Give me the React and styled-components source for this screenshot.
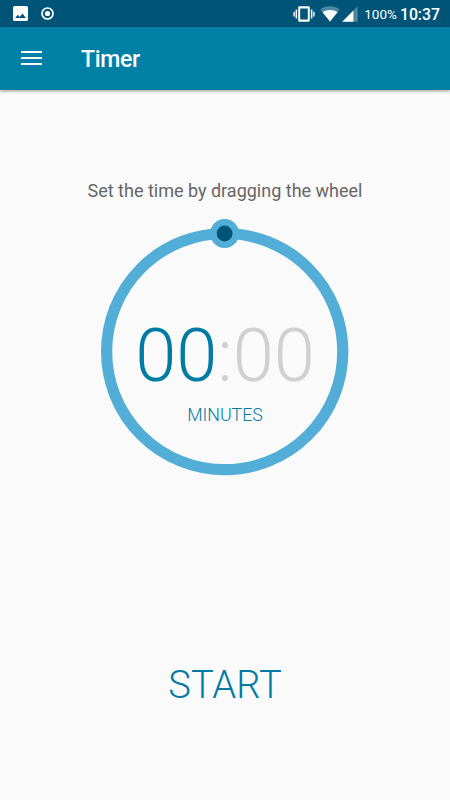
import React from 'react';
import styled, { createGlobalStyle } from "styled-components";

const GlobalStyle = createGlobalStyle`
  * {
    box-sizing: border-box;
    margin: 0;
    padding: 0;
  }

  body {
    background: #fafafa;
    font-family: Roboto, sans-serif;
  }
`;

const StatusIcons = () => (
    <>
        <svg width="22" height="18" viewBox="0 0 22 18" fill="#fff">
            <path fillRule="evenodd" d="M6.500 1.200h9a1.300 1.300 0 0 1 1.300 1.300v13a1.300 1.300 0 0 1-1.300 1.300h-9a1.300 1.300 0 0 1-1.300-1.300v-13A1.300 1.300 0 0 1 6.500 1.200zM7.200 3.500v11h7.600v-11z" />
            <path d="M2.600 4.500h1.500v9H2.600zM.4 6.800h1.400v4.600H.4zM17.900 4.500h1.500v9h-1.500zM20.200 6.800h1.400v4.600h-1.400z" />
        </svg>
        <svg width="20" height="16" viewBox="0 0 20 16">
            <path d="M10 15.500L.2 3.400C3 1.300 6.400.2 10 .2s7 1.100 9.800 3.200z" fill="#fff" opacity=".3" />
            <path d="M10 15.500L2.500 6.300C4.600 4.800 7.200 4 10 4s5.400.8 7.500 2.300z" fill="#fff" />
        </svg>
        <svg width="16" height="16" viewBox="0 0 16 16">
            <path d="M.3 15.700L15.700.3v15.400z" fill="#fff" opacity=".3" />
            <path d="M.3 15.700L11.400 4.600v11.100z" fill="#fff" />
        </svg>
    </>
);

const Dial = () => (
    <svg width="250" height="258" viewBox="0 0 250 258">
        <circle cx="124.700" cy="133.600" r="118.100" fill="none" stroke="#52aed7" strokeWidth="11.200" />
        <circle cx="124.600" cy="15.500" r="14.500" fill="#52aed7" />
        <circle cx="124.600" cy="15.500" r="7.900" fill="#005478" />
    </svg>
);

const App = () => {
    return (
        <Screen>
            <GlobalStyle />
            <StatusBar>
                <Notifications>
                    <svg width="15" height="15" viewBox="0 0 15 15">
                        <rect width="15" height="15" rx="1.600" fill="#fff" />
                        <path d="M2.200 12l2.600-3.300 2 2.200L9.500 7.500l3.300 4.500z" fill="#005478" />
                    </svg>
                    <svg width="13" height="13" viewBox="0 0 13 13">
                        <circle cx="6.500" cy="6.500" r="5.500" fill="none" stroke="#fff" strokeWidth="1.700" />
                        <circle cx="6.500" cy="6.500" r="2.600" fill="#fff" />
                    </svg>
                </Notifications>
                <System>
                    <StatusIcons />
                    <Battery>100%</Battery>
                    <Clock>10:37</Clock>
                </System>
            </StatusBar>
            <AppBar>
                <MenuButton aria-label="Menu">
                    <span />
                    <span />
                    <span />
                </MenuButton>
                <Title>Timer</Title>
            </AppBar>
            <Content>
                <Hint>Set the time by dragging the wheel</Hint>
                <Wheel>
                    <Dial />
                    <Readout>
                        <Digits>00<Muted>:00</Muted></Digits>
                        <Unit>MINUTES</Unit>
                    </Readout>
                </Wheel>
                <StartButton>START</StartButton>
            </Content>
        </Screen>
    )
}

export default App;

const Screen = styled.div`
  display: flex;
  flex-direction: column;
  width: 450px;
  height: 800px;
  overflow: hidden;
  background: #fafafa;
`;

const StatusBar = styled.header`
  display: flex;
  justify-content: space-between;
  align-items: center;
  flex: none;
  height: 27px;
  padding: 0 10px 0 13px;
  background: #005478;
  color: #fff;
`;

const Notifications = styled.div`
  display: flex;
  align-items: center;
  gap: 13px;
`;

const System = styled.div`
  display: flex;
  align-items: center;

  svg {
    flex: none;
    margin-right: 5px;
  }

  svg + svg {
    margin-top: 1px;
    margin-right: 2px;
  }

  svg:nth-of-type(3) {
    margin-right: 6px;
  }
`;

const Battery = styled.span`
  margin-right: 3px;
  font-size: 13.500px;
  line-height: 27px;
  padding-top: 1px;
`;

const Clock = styled.span`
  font-size: 15.800px;
  font-weight: 500;
  line-height: 27px;
  padding-top: 1px;
`;

const AppBar = styled.nav`
  display: flex;
  align-items: center;
  flex: none;
  height: 63px;
  padding-left: 21px;
  background: #0080a5;
  box-shadow: 0 1px 3px rgba(0, 0, 0, 0.4);
`;

const MenuButton = styled.button`
  display: flex;
  flex-direction: column;
  gap: 4px;
  width: 21px;
  margin-right: 39px;
  margin-bottom: 1px;
  border: none;
  background: none;

  span {
    height: 2px;
    background: #fff;
  }
`;

const Title = styled.h1`
  color: #fff;
  font-size: 23px;
  font-weight: 500;
  letter-spacing: -0.3px;
  line-height: 30px;
  padding-top: 2px;
`;

const Content = styled.main`
  display: flex;
  flex-direction: column;
  align-items: center;
  padding-top: 89px;
`;

const Hint = styled.p`
  color: #666;
  font-size: 18px;
  line-height: 24px;
  white-space: nowrap;
`;

const Wheel = styled.div`
  display: grid;
  width: 250px;
  height: 258px;
  margin-top: 15px;

  > * {
    grid-area: 1 / 1;
  }
`;

const Readout = styled.div`
  display: flex;
  flex-direction: column;
  align-items: center;
  padding-top: 95px;
  color: #007ba3;
  font-weight: 300;
`;

const Digits = styled.div`
  font-size: 74px;
  line-height: 86px;
  font-weight: 300;
  white-space: nowrap;
`;

const Muted = styled.span`
  color: #d0d0d0;
`;

const Unit = styled.div`
  font-size: 17.800px;
  line-height: 22px;
  margin-top: 5px;
`;

const StartButton = styled.button`
  margin-top: 186px;
  border: none;
  background: none;
  color: #007ba3;
  font-family: inherit;
  font-size: 38.200px;
  font-weight: 300;
  line-height: 46px;
`;
